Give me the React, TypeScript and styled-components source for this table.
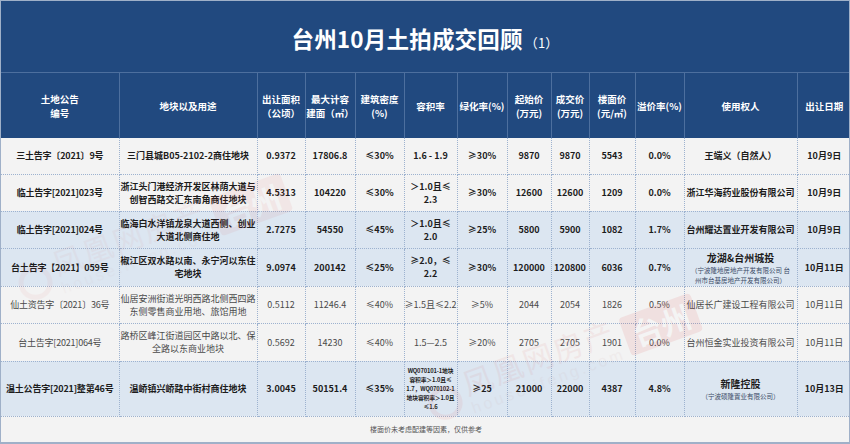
import React from "react";
import styled, { createGlobalStyle } from "styled-components";

const GlobalStyle = createGlobalStyle`
  html, body {
    margin: 0;
    padding: 0;
    background: #ffffff;
  }
  body {
    font-family: "Noto Sans CJK SC", "Noto Sans", sans-serif;
  }
`;

type Cell = string | { main: string; sub?: string; small?: boolean };

interface Row {
  tone: "grey" | "blue";
  strong: boolean;
  height: number;
  cells: Cell[];
}

const widths = [118, 138, 48, 50, 49, 53, 50, 44, 38, 46, 49, 113, 54];

const heads = [
  "土地公告\n编号",
  "地块以及用途",
  "出让面积\n（公顷）",
  "最大计容\n建面（㎡）",
  "建筑密度\n(%)",
  "容积率",
  "绿化率(%)",
  "起始价\n(万元)",
  "成交价\n(万元)",
  "楼面价\n(元/㎡)",
  "溢价率(%)",
  "使用权人",
  "出让日期",
];

const rows: Row[] = [
  {
    tone: "grey",
    strong: true,
    height: 36,
    cells: ["三土告字〔2021〕9号", "三门县城B05-2102-2商住地块", "0.9372", "17806.8", "≤30%", "1.6 - 1.9", "≥30%", "9870", "9870", "5543", "0.0%", "王端义（自然人）", "10月9日"],
  },
  {
    tone: "grey",
    strong: true,
    height: 37,
    cells: ["临土告字[2021]023号", "浙江头门港经济开发区林荫大道与\n创智西路交汇东南角商住地块", "4.5313", "104220", "≤30%", "＞1.0且≤\n2.3", "≥30%", "12600", "12600", "1209", "0.0%", "浙江华海药业股份有限公司", "10月9日"],
  },
  {
    tone: "blue",
    strong: true,
    height: 37,
    cells: ["临土告字[2021]024号", "临海白水洋镇龙泉大道西侧、创业\n大道北侧商住地", "2.7275", "54550", "≤45%", "＞1.0且≤\n2.0", "≥25%", "5800", "5900", "1082", "1.7%", "台州耀达置业开发有限公司", "10月9日"],
  },
  {
    tone: "blue",
    strong: true,
    height: 38,
    cells: [
      "台土告字【2021】059号",
      "椒江区双水路以南、永宁河以东住\n宅地块",
      "9.0974",
      "200142",
      "≤25%",
      "≥2.0，≤\n2.2",
      "≥30%",
      "120000",
      "120800",
      "6036",
      "0.7%",
      { main: "龙湖&台州城投", sub: "（宁波隆地房地产开发有限公司 台\n州市台基房地产开发有限公司）" },
      "10月11日",
    ],
  },
  {
    tone: "grey",
    strong: false,
    height: 37,
    cells: ["仙土资告字〔2021〕36号", "仙居安洲街道光明西路北侧西四路\n东侧零售商业用地、旅馆用地", "0.5112", "11246.4", "≤40%", "≥1.5且≤2.2", "≥5%", "2044", "2054", "1826", "0.5%", "仙居长广建设工程有限公司", "10月11日"],
  },
  {
    tone: "grey",
    strong: false,
    height: 38,
    cells: ["台土告字[2021]064号", "路桥区峰江街道园区中路以北、保\n全路以东商业地块", "0.5692", "14230", "≤40%", "1.5—2.5", "≥20%", "2705", "2705", "1901", "0.0%", "台州恒金实业投资有限公司", "10月11日"],
  },
  {
    tone: "blue",
    strong: true,
    height: 55,
    cells: [
      "温土公告字[2021]整第46号",
      "温峤镇兴峤路中街村商住地块",
      "3.0045",
      "50151.4",
      "≤35%",
      { main: "WQ070101-1地块\n容积率＞1.0且≤\n1.7，WQ070102-1\n地块容积率＞1.0且\n≤1.6", small: true },
      "≥25",
      "21000",
      "22000",
      "4387",
      "4.8%",
      { main: "新隆控股", sub: "（宁波硕隆置业有限公司）" },
      "10月13日",
    ],
  },
];

const Page = styled.div`
  position: relative;
  width: 850px;
  height: 444px;
  overflow: hidden;
  background: #f3f3f3;
  border: 1px solid #9fb0c8;
  border-bottom-width: 2px;
  box-sizing: border-box;
`;

const TitleBand = styled.div`
  height: 71px;
  background: #21497f;
  display: flex;
  align-items: center;
  justify-content: center;
  color: #ffffff;
  border-bottom: 1px solid #4d6f9e;
`;

const Title = styled.h1`
  margin: 0 0 -2px 0;
  font-size: 22.5px;
  font-weight: 700;
  letter-spacing: 0.2px;
  display: flex;
  align-items: baseline;
`;

const TitleNo = styled.span`
  font-size: 13px;
  font-weight: 400;
  margin-left: 2px;
`;

const Table = styled.table`
  width: 848px;
  border-collapse: collapse;
  table-layout: fixed;
`;

const HeadCell = styled.th`
  height: 65px;
  background: #21497f;
  color: #ffffff;
  font-size: 9.5px;
  line-height: 14px;
  font-weight: 700;
  text-align: center;
  vertical-align: middle;
  white-space: pre-line;
  border-right: 1px solid #4d6f9e;
  padding: 0;
  &:last-child {
    border-right: none;
  }
`;

const BodyRow = styled.tr<{ $tone: "grey" | "blue"; $h: number }>`
  height: ${(p) => p.$h}px;
  background: ${(p) => (p.$tone === "blue" ? "#dce6f1" : "#f3f3f3")};
`;

const BodyCell = styled.td<{ $strong: boolean }>`
  font-size: 9px;
  line-height: 13px;
  font-weight: ${(p) => (p.$strong ? 700 : 400)};
  color: ${(p) => (p.$strong ? "#1c1c1c" : "#4a4a4a")};
  text-align: center;
  vertical-align: middle;
  white-space: pre;
  padding: 0;
  border: 1px dotted #9db2cf;
  border-top: none;
  &:first-child {
    border-left: none;
    letter-spacing: -0.2px;
  }
  &:last-child {
    border-right: none;
  }
`;

const Main = styled.div`
  font-size: 10px;
  line-height: 15px;
`;

const Sub = styled.div`
  font-size: 6.5px;
  line-height: 10px;
  font-weight: 400;
  color: #3a4a66;
`;

const Tiny = styled.div`
  font-size: 5.8px;
  line-height: 9px;
  white-space: pre;
  letter-spacing: -0.15px;
`;

const FootCell = styled.td`
  height: 24px;
  background: #f3f3f3;
  text-align: center;
  vertical-align: middle;
  font-size: 7px;
  color: #555555;
  padding: 0;
`;

const Mark = styled.div<{ $o: number }>`
  position: absolute;
  transform: rotate(-20deg);
  opacity: ${(p) => p.$o};
  pointer-events: none;
  display: flex;
  align-items: center;
  gap: 6px;
`;

const MarkLogo = styled.div`
  width: 34px;
  height: 34px;
  border-radius: 50%;
  border: 5px solid #e06060;
  box-sizing: border-box;
`;

const MarkText = styled.div`
  font-family: "Liberation Serif", "Noto Sans CJK SC", serif;
  color: #d86a6a;
  font-size: 30px;
  line-height: 30px;
  letter-spacing: 2px;
`;

const MarkUrl = styled.div`
  font-family: "Liberation Sans", sans-serif;
  color: #c9a0a0;
  font-size: 16px;
  letter-spacing: 3px;
`;

const Stamp = styled.div`
  background: #d92a2a;
  color: #ffffff;
  font-size: 30px;
  font-weight: 700;
  padding: 0 8px;
  border-radius: 4px;
  line-height: 40px;
`;

function renderCell(c: Cell) {
  if (typeof c === "string") return c;
  if (c.small) return <Tiny>{c.main}</Tiny>;
  return (
    <>
      <Main>{c.main}</Main>
      {c.sub && <Sub>{c.sub}</Sub>}
    </>
  );
}

const Watermark = ({ x, y, o }: { x: number; y: number; o: number }) => (
  <Mark $o={o} style={{ left: x, top: y }}>
    <MarkLogo />
    <div>
      <MarkText>凤凰网房产</MarkText>
      <MarkUrl>house.ifeng.com</MarkUrl>
    </div>
    <Stamp>台州</Stamp>
  </Mark>
);

export default function App() {
  return (
    <>
      <GlobalStyle />
      <Page>
        <TitleBand>
          <Title>
            台州10月土拍成交回顾<TitleNo>（1）</TitleNo>
          </Title>
        </TitleBand>
        <Table>
          <colgroup>
            {widths.map((w, i) => (
              <col key={i} style={{ width: w }} />
            ))}
          </colgroup>
          <thead>
            <tr>
              {heads.map((h) => (
                <HeadCell key={h}>{h}</HeadCell>
              ))}
            </tr>
          </thead>
          <tbody>
            {rows.map((r, i) => (
              <BodyRow key={i} $tone={r.tone} $h={r.height}>
                {r.cells.map((c, j) => (
                  <BodyCell key={j} $strong={r.strong}>
                    {renderCell(c)}
                  </BodyCell>
                ))}
              </BodyRow>
            ))}
            <tr>
              <FootCell colSpan={13}>楼面价未考虑配建等因素，仅供参考</FootCell>
            </tr>
          </tbody>
        </Table>
        <Watermark x={420} y={335} o={0.09} />
        <Watermark x={10} y={215} o={0.06} />
      </Page>
    </>
  );
}
